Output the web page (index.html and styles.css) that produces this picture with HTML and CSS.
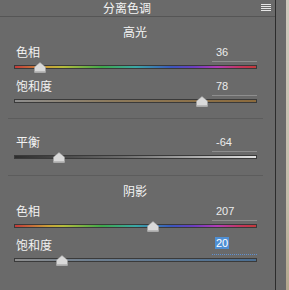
FILE: index.html
```html
<!DOCTYPE html>
<html lang="zh">
<head>
<meta charset="utf-8">
<title>分离色调</title>
<link rel="stylesheet" href="styles.css">
</head>
<body>
<div class="screen">
  <div class="panel">
    <div class="header">
      <span class="title">分离色调</span>
      <svg class="menu" width="10" height="8" viewBox="0 0 10 8"><rect x="0" y="0" width="10" height="1" fill="#e6e6e6"/><rect x="0" y="2" width="10" height="1" fill="#e6e6e6"/><rect x="0" y="4" width="10" height="1" fill="#e6e6e6"/><rect x="0" y="6" width="10" height="1" fill="#e6e6e6"/></svg>
    </div>

    <div class="section">
      <div class="section-title">高光</div>
      <div class="control">
        <div class="control-head"><span class="label">色相</span><span class="field"><span class="value">36</span></span></div>
        <div class="slider"><div class="track hue"></div><svg class="thumb" style="left:20px" width="12" height="11" viewBox="0 0 12 11"><path d="M6 0.5 L11.5 5 V10.5 H0.5 V5 Z" fill="#d9d9d9" stroke="#a0a0a0" stroke-width="0.6"/><rect x="0.8" y="9" width="10.4" height="1.4" fill="#b8b8b8"/></svg></div>
      </div>
      <div class="control">
        <div class="control-head"><span class="label">饱和度</span><span class="field"><span class="value">78</span></span></div>
        <div class="slider"><div class="track sat-warm"></div><svg class="thumb" style="left:182px" width="12" height="11" viewBox="0 0 12 11"><path d="M6 0.5 L11.5 5 V10.5 H0.5 V5 Z" fill="#d9d9d9" stroke="#a0a0a0" stroke-width="0.6"/><rect x="0.8" y="9" width="10.4" height="1.4" fill="#b8b8b8"/></svg></div>
      </div>
    </div>

    <div class="divider"></div>

    <div class="section balance">
      <div class="control">
        <div class="control-head"><span class="label">平衡</span><span class="field"><span class="value">-64</span></span></div>
        <div class="slider"><div class="track bal"></div><svg class="thumb" style="left:39px" width="12" height="11" viewBox="0 0 12 11"><path d="M6 0.5 L11.5 5 V10.5 H0.5 V5 Z" fill="#d9d9d9" stroke="#a0a0a0" stroke-width="0.6"/><rect x="0.8" y="9" width="10.4" height="1.4" fill="#b8b8b8"/></svg></div>
      </div>
    </div>

    <div class="divider second"></div>

    <div class="section">
      <div class="section-title">阴影</div>
      <div class="control">
        <div class="control-head"><span class="label">色相</span><span class="field"><span class="value">207</span></span></div>
        <div class="slider"><div class="track hue"></div><svg class="thumb" style="left:133px" width="12" height="11" viewBox="0 0 12 11"><path d="M6 0.5 L11.5 5 V10.5 H0.5 V5 Z" fill="#d9d9d9" stroke="#a0a0a0" stroke-width="0.6"/><rect x="0.8" y="9" width="10.4" height="1.4" fill="#b8b8b8"/></svg></div>
      </div>
      <div class="control">
        <div class="control-head"><span class="label">饱和度</span><span class="field focused"><span class="value selected">20</span></span></div>
        <div class="slider"><div class="track sat-cool"></div><svg class="thumb" style="left:42px" width="12" height="11" viewBox="0 0 12 11"><path d="M6 0.5 L11.5 5 V10.5 H0.5 V5 Z" fill="#d9d9d9" stroke="#a0a0a0" stroke-width="0.6"/><rect x="0.8" y="9" width="10.4" height="1.4" fill="#b8b8b8"/></svg></div>
      </div>
    </div>
  </div>
  <div class="gutter"></div>
  <div class="edge"></div>
</div>
</body>
</html>
```

FILE: styles.css
```css
html, body {
  margin: 0;
  padding: 0;
  background: #6a6a6a;
}

body {
  width: 289px;
  height: 290px;
  overflow: hidden;
  font-family: "Noto Sans CJK SC", "Noto Sans", sans-serif;
  color: #f2f2f2;
}

.screen {
  display: flex;
  height: 290px;
}

.panel {
  width: 275px;
  flex: none;
  border-right: 1px solid #2c2c2c;
  display: flex;
  flex-direction: column;
}

.gutter {
  width: 10px;
  flex: none;
  background: #6a6a6a;
}

.edge {
  width: 3px;
  flex: none;
  background: linear-gradient(to bottom, #d0cabe, #c4bcaa 70%, #b4a88e);
}

.header {
  height: 16px;
  border-bottom: 1px solid #555555;
  display: flex;
  align-items: flex-start;
  position: relative;
}

.title {
  padding-left: 103px;
  font-size: 12px;
  line-height: 16px;
  color: #f4f4f4;
}

.menu {
  margin-left: auto;
  margin-right: 4px;
  margin-top: 4px;
}

.section {
  display: flex;
  flex-direction: column;
  padding-top: 8px;
}

.section.balance {
  padding-top: 0;
}

.section-title {
  font-size: 12px;
  line-height: 14px;
  height: 14px;
  padding-left: 123px;
  color: #f4f4f4;
}

.control {
  margin-top: 5px;
  display: flex;
  flex-direction: column;
}

.balance .control {
  margin-top: 15px;
}

.control-head {
  display: flex;
  height: 18px;
}

.label {
  padding-left: 16px;
  font-size: 12px;
  line-height: 16px;
  width: 196px;
  flex: none;
}

.field {
  width: 45px;
  height: 17px;
  border-bottom: 1px solid #8e8e8e;
  font-family: "Liberation Sans", Arial, sans-serif;
  font-size: 11px;
  line-height: 16px;
  color: #ececec;
}

.field.focused {
  border-bottom: 1px dotted #5f90cf;
}

.value {
  padding-left: 4px;
}

.value.selected {
  display: inline-block;
  vertical-align: top;
  line-height: 12px;
  height: 12px;
  margin-left: 3px;
  padding: 0 1px;
  background: #4f8fd4;
  color: #ffffff;
}

.slider {
  position: relative;
  margin-left: 14px;
  width: 243px;
  height: 11px;
}

.track {
  margin-top: 3px;
  height: 2px;
  border: 1px solid #3a3a3a;
}

.track.hue {
  background: linear-gradient(to right, #c43a3a 0%, #c9a238 14%, #b6bc3c 20%, #3ea84a 36%, #3aa7a6 50%, #3a56bd 65%, #6a3ec0 74%, #b43cb6 84%, #c4365a 94%, #c43a3a 100%);
}

.track.sat-warm {
  background: linear-gradient(to right, #8e8e8e 0%, #8c7a5c 40%, #8b6a3c 100%);
}

.track.bal {
  background: linear-gradient(to right, #2e2e2e 0%, #6c6c6c 45%, #e2e2e2 100%);
}

.track.sat-cool {
  background: linear-gradient(to right, #8e8e8e 0%, #6e7e8e 30%, #4a6e92 100%);
}

.thumb {
  position: absolute;
  top: 0;
}

.divider {
  margin-top: 11px;
  margin-left: 8px;
  margin-right: 12px;
  height: 1px;
  background: #5c5c5c;
}

.divider.second {
  margin-top: 12px;
}
```
